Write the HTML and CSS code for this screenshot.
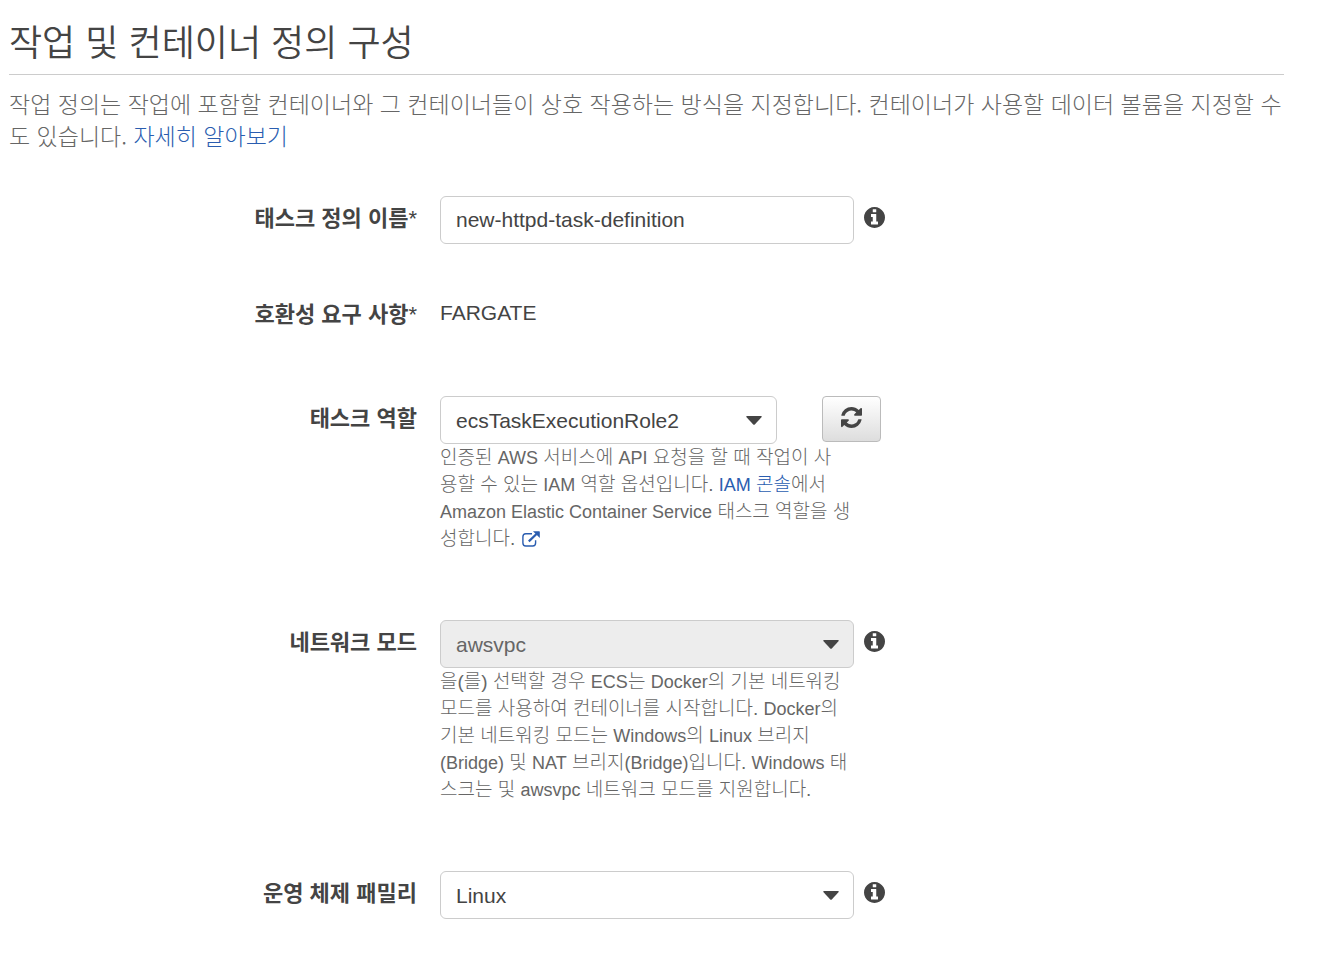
FILE: index.html
```
<!DOCTYPE html>
<html lang="ko">
<head>
    <meta charset="UTF-8">
    <meta name="viewport" content="width=device-width, initial-scale=1.0">
    <title>작업 및 컨테이너 정의 구성</title>
    <link rel="stylesheet" href="styles.css">
</head>
<body>
    <!-- 공용 아이콘 -->
    <svg class="icon-defs" aria-hidden="true">
        <symbol id="icon-info" viewBox="128 128 1536 1536">
            <path d="M1152 1376v-160q0-14-9-23t-23-9h-96v-512q0-14-9-23t-23-9h-320q-14 0-23 9t-9 23v160q0 14 9 23t23 9h96v320h-96q-14 0-23 9t-9 23v160q0 14 9 23t23 9h448q14 0 23-9t9-23zm-128-896v-160q0-14-9-23t-23-9h-192q-14 0-23 9t-9 23v160q0 14 9 23t23 9h192q14 0 23-9t9-23zm640 416q0 209-103 385.5t-279.5 279.5-385.5 103-385.5-103-279.5-279.5-103-385.5 103-385.5 279.5-279.5 385.5-103 385.5 103 279.5 279.5 103 385.5z"/>
        </symbol>
        <symbol id="icon-refresh" viewBox="128 128 1536 1536">
            <path d="M1639 1056q0 5-1 7-64 268-268 434.5t-478 166.5q-146 0-282.5-55t-243.5-157l-129 129q-19 19-45 19t-45-19-19-45v-448q0-26 19-45t45-19h448q26 0 45 19t19 45-19 45l-137 137q71 66 161 102t187 36q134 0 250-65t186-179q11-17 53-117 8-23 30-23h192q13 0 22.5 9.5t9.5 22.5zm25-800v448q0 26-19 45t-45 19h-448q-26 0-45-19t-19-45 19-45l138-138q-148-137-349-137-134 0-250 65t-186 179q-11 17-53 117-8 23-30 23h-199q-13 0-22.5-9.5t-9.5-22.5v-7q65-268 270-434.5t480-166.5q146 0 284 55.5t245 156.5l130-129q19-19 45-19t45 19 19 45z"/>
        </symbol>
        <symbol id="icon-caret" viewBox="0 0 16 9">
            <path d="M1 0h14q1 0 .7 1L9 8.3q-1 1-2 0L.3 1Q0 0 1 0z"/>
        </symbol>
        <symbol id="icon-external" viewBox="0 0 18 16">
            <path d="M10 2.8H3.8Q.9 2.8.9 5.7v6.4q0 2.9 2.9 2.9h6.9q2.9 0 2.9-2.9V9.3" fill="none" stroke="currentColor" stroke-width="1.4"/>
            <path d="M6.8 10.4L14.5 3" fill="none" stroke="currentColor" stroke-width="2.2"/>
            <path d="M11 .3h6.2q.6 0 .6.6V7z"/>
        </symbol>
    </svg>

    <main class="container">
        <h1>작업 및 컨테이너 정의 구성</h1>
        <p class="description">작업 정의는 작업에 포함할 컨테이너와 그 컨테이너들이 상호 작용하는 방식을 지정합니다. 컨테이너가 사용할 데이터 볼륨을 지정할 수<br>도 있습니다. <a href="#">자세히 알아보기</a></p>

        <form class="task-form">
            <div class="row">
                <label class="row-label" for="taskName">태스크 정의 이름<span class="required">*</span></label>
                <div class="row-control">
                    <input type="text" class="input-box" id="taskName" value="new-httpd-task-definition">
                </div>
                <button type="button" class="info-button" aria-label="태스크 정의 이름 정보"><svg><use href="#icon-info"/></svg></button>
            </div>

            <div class="row">
                <div class="row-label">호환성 요구 사항<span class="required">*</span></div>
                <div class="row-control static-value">FARGATE</div>
            </div>

            <div class="row">
                <label class="row-label" for="taskRole">태스크 역할</label>
                <div class="row-control">
                    <div class="with-button">
                        <div class="select-box">
                            <select class="input-box" id="taskRole">
                                <option>ecsTaskExecutionRole2</option>
                            </select>
                            <svg class="caret"><use href="#icon-caret"/></svg>
                        </div>
                        <button type="button" class="refresh-button" aria-label="새로 고침"><svg><use href="#icon-refresh"/></svg></button>
                    </div>
                    <p class="help">인증된 <span class="en">AWS</span> 서비스에 <span class="en">API</span> 요청을 할 때 작업이 사<br>용할 수 있는 <span class="en">IAM</span> 역할 옵션입니다. <a href="#"><span class="en">IAM</span> 콘솔</a>에서 <span class="en">Amazon Elastic Container Service</span> 태스크 역할을 생성합니다. <a href="#" aria-label="새 창에서 열기"><svg class="external"><use href="#icon-external"/></svg></a></p>
                </div>
            </div>

            <div class="row">
                <label class="row-label" for="networkMode">네트워크 모드</label>
                <div class="row-control">
                    <div class="select-box">
                        <select class="input-box" id="networkMode" disabled>
                            <option>awsvpc</option>
                        </select>
                        <svg class="caret"><use href="#icon-caret"/></svg>
                    </div>
                    <p class="help">을(를) 선택할 경우 <span class="en">ECS</span>는 <span class="en">Docker</span>의 기본 네트워킹 모드를 사용하여 컨테이너를 시작합니다. <span class="en">Docker</span>의 기본 네트워킹 모드는 <span class="en">Windows</span>의 <span class="en">Linux</span> 브리지<span class="en">(Bridge)</span> 및 <span class="en">NAT</span> 브리지<span class="en">(Bridge)</span>입니다. <span class="en">Windows</span> 태스크는 및 <span class="en">awsvpc</span> 네트워크 모드를 지원합니다.</p>
                </div>
                <button type="button" class="info-button" aria-label="네트워크 모드 정보"><svg><use href="#icon-info"/></svg></button>
            </div>

            <div class="row">
                <label class="row-label" for="osFamily">운영 체제 패밀리</label>
                <div class="row-control">
                    <div class="select-box">
                        <select class="input-box" id="osFamily">
                            <option>Linux</option>
                        </select>
                        <svg class="caret"><use href="#icon-caret"/></svg>
                    </div>
                </div>
                <button type="button" class="info-button" aria-label="운영 체제 패밀리 정보"><svg><use href="#icon-info"/></svg></button>
            </div>
        </form>
    </main>
</body>
</html>
```
FILE: styles.css
```
* {
    box-sizing: border-box;
}
body {
    margin: 0;
    font-family: "Liberation Sans", "Noto Sans CJK KR", sans-serif;
    font-size: 21px;
    font-weight: 350;
    color: #444;
    background-color: #fff;
}
a {
    color: #2a5db0;
    text-decoration: none;
}
svg {
    display: block;
    fill: currentColor;
}
.icon-defs {
    display: none;
}
.container {
    padding: 15px 54px 24px 9px;
}
h1, .description, .row-label {
    font-family: "Noto Sans CJK KR", "Liberation Sans", sans-serif;
}
h1 {
    margin: 0;
    padding-bottom: 9px;
    font-size: 36px;
    font-weight: 350;
    line-height: 50px;
    border-bottom: 1px solid #ccc;
}
.description {
    margin: 12px 0 45px;
    font-size: 23px;
    font-weight: 300;
    line-height: 32px;
    color: #666;
}

/* 폼 행: 레이블 / 입력 / 정보 아이콘 */
.task-form {
    display: flex;
    flex-direction: column;
    gap: 48px;
}
.row {
    display: grid;
    grid-template-columns: 408fr 414fr 453fr;
    align-items: start;
}
.row-label {
    padding-top: 5px;
    font-size: 22px;
    font-weight: 700;
    line-height: 30px;
    text-align: right;
}
.required {
    font-family: "Liberation Sans", sans-serif;
    font-weight: 400;
    line-height: 1;
}
.row-control {
    min-width: 0;
    margin-left: 23px;
    margin-right: -23px;
}
.static-value {
    min-height: 56px;
    padding-top: 6px;
    line-height: 30px;
}
.input-box {
    display: block;
    width: 100%;
    height: 48px;
    padding: 0 15px;
    font: inherit;
    color: #444;
    background-color: #fff;
    border: 1px solid #ccc;
    border-radius: 6px;
    appearance: none;
}
.input-box:disabled {
    color: #666;
    background-color: #ededed;
    opacity: 1;
}
.select-box {
    display: grid;
    flex: 1;
    align-items: center;
}
.select-box > * {
    grid-area: 1 / 1;
}
.caret {
    justify-self: end;
    width: 16px;
    height: 9px;
    margin-right: 15px;
    pointer-events: none;
}
.with-button {
    display: flex;
    align-items: flex-start;
    gap: 45px;
    margin-right: -27px;
}
.refresh-button {
    display: flex;
    justify-content: center;
    width: 59px;
    height: 46px;
    padding: 10px 0;
    color: #444;
    background: linear-gradient(#fff, #ddd);
    border: 1px solid #bbb;
    border-radius: 4px;
    cursor: pointer;
}
.refresh-button svg {
    width: 21px;
    height: 21px;
}
.info-button {
    justify-self: start;
    margin: 11px 0 0 33px;
    padding: 0;
    color: #444;
    background: none;
    border: none;
    cursor: pointer;
}
.info-button svg {
    width: 21px;
    height: 21px;
}
.help {
    margin: 0;
    padding-bottom: 20px;
    font-size: 19px;
    font-weight: 300;
    line-height: 27px;
    color: #666;
}
.en {
    font-size: 18px;
    line-height: 1;
}
.external {
    display: inline-block;
    width: 18px;
    height: 16px;
    margin-left: 2px;
    vertical-align: -2px;
}
```
